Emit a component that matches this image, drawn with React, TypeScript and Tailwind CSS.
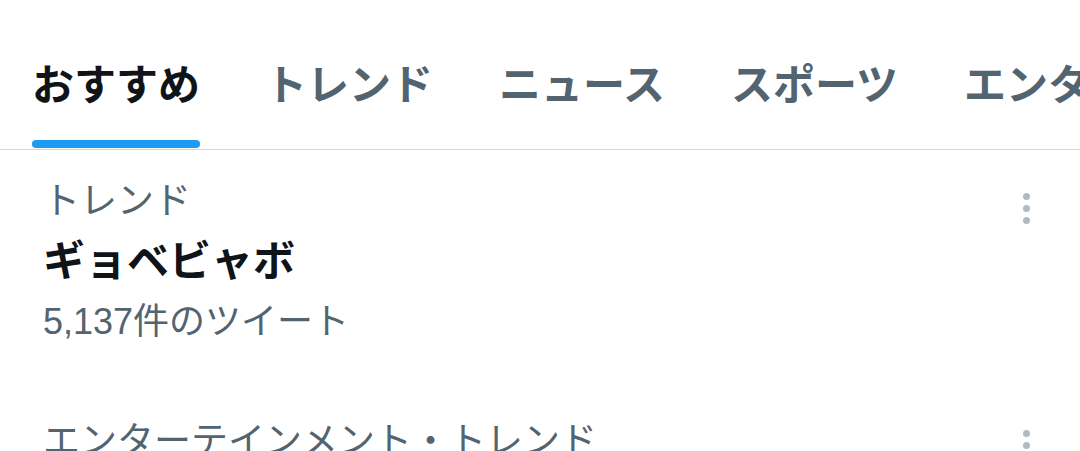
import React from "react";

const font = { fontFamily: '"Liberation Sans", "Noto Sans CJK JP", sans-serif' };

function Dots({ top }: { top: string }) {
  return (
    <div className={"flex flex-col items-center gap-[5px] " + top}>
      <div className="w-[7px] h-[7px] rounded-full bg-[#aebbc4]" />
      <div className="w-[7px] h-[7px] rounded-full bg-[#aebbc4]" />
      <div className="w-[7px] h-[7px] rounded-full bg-[#aebbc4]" />
    </div>
  );
}

export default function App() {
  const tabs = ["トレンド", "ニュース", "スポーツ", "エンターテインメント"];
  return (
    <div className="w-[1080px] h-[451px] overflow-hidden bg-white" style={font}>
      <div className="flex h-[150px] border-b border-[#cfd9de] overflow-hidden whitespace-nowrap">
        <div className="flex flex-col items-center pl-[32px] pr-[32px] shrink-0">
          <div className="pt-[62px] h-[140px] text-[42px] leading-[48px] font-bold text-[#0f1419]">おすすめ</div>
          <div className="h-[8px] w-full rounded-full bg-[#1d9bf0]" />
        </div>
        {tabs.map((t) => (
          <div key={t} className="flex flex-col items-center px-[33px] shrink-0">
            <div className="pt-[62px] h-[140px] text-[42px] leading-[48px] font-bold text-[#536471]">{t}</div>
          </div>
        ))}
      </div>
      <div className="flex justify-between pl-[43px] pr-[50px] pt-[22px] pb-[35px]">
        <div className="flex flex-col">
          <div className="text-[37px] leading-[60px] text-[#536471]">トレンド</div>
          <div className="text-[42px] leading-[60px] font-bold text-[#0f1419]">ギョベビャボ</div>
          <div className="text-[36px] leading-[60px] text-[#536471]">5,137件のツイート</div>
        </div>
        <Dots top="mt-[21px]" />
      </div>
      <div className="flex justify-between pl-[43px] pr-[50px] pt-[25px]">
        <div className="flex flex-col">
          <div className="text-[37px] leading-[60px] text-[#536471] whitespace-nowrap">エンターテインメント・トレンド</div>
        </div>
        <Dots top="mt-[18px]" />
      </div>
    </div>
  );
}
